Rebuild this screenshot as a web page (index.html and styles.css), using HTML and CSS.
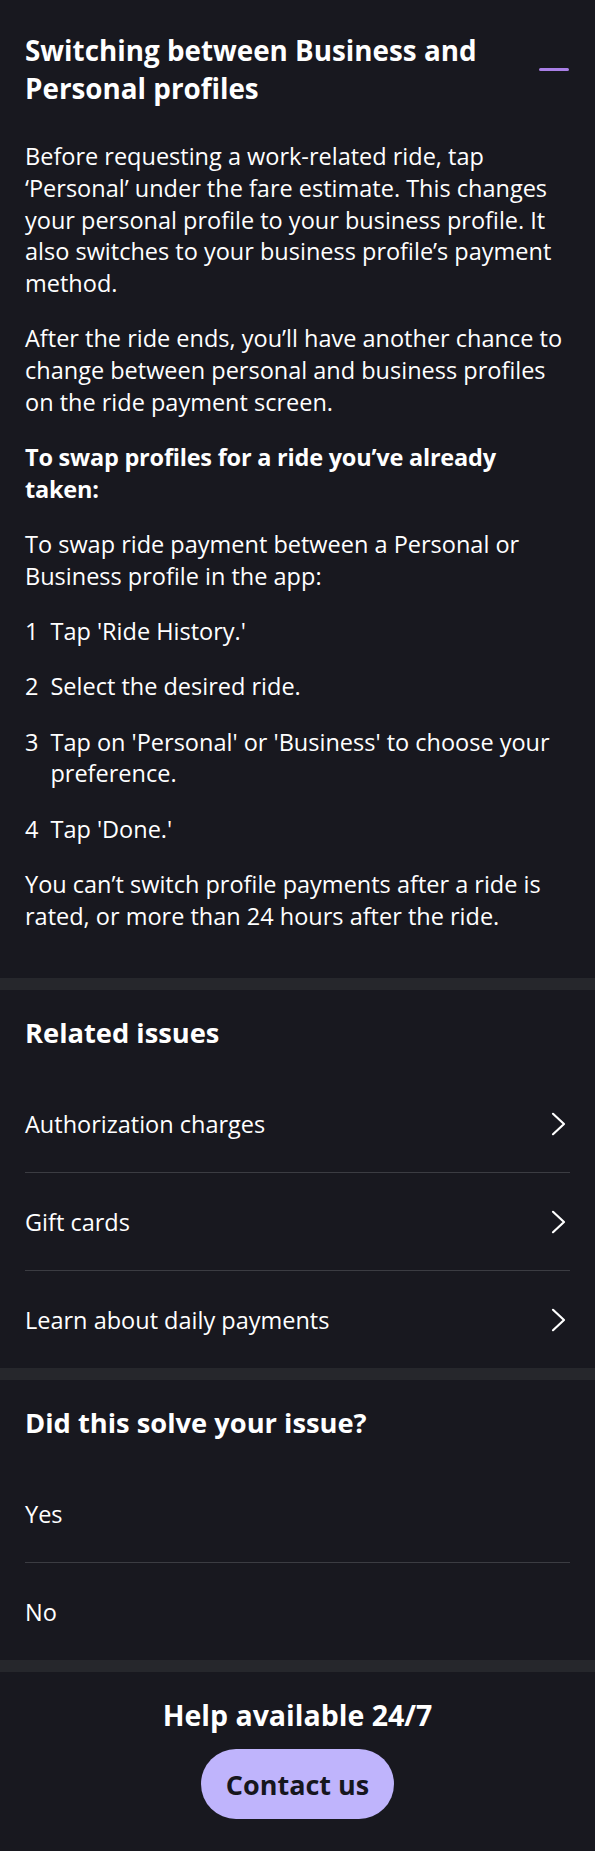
FILE: index.html
```html
<!DOCTYPE html>
<html lang="en">
<head>
<meta charset="utf-8">
<title>Switching between Business and Personal profiles</title>
<link rel="stylesheet" href="styles.css">
</head>
<body>
<main class="page">
  <section class="article">
    <header class="article-head">
      <h1 class="article-title">Switching between Business and Personal profiles</h1>
      <span class="collapse-dash" aria-hidden="true"></span>
    </header>
    <div class="article-body">
      <p>Before requesting a work-related ride, tap ‘Personal’ under the fare estimate. This changes your personal profile to your business profile. It also switches to your business profile’s payment method.</p>
      <p>After the ride ends, you’ll have another chance to change between personal and business profiles on the ride payment screen.</p>
      <p class="strong">To swap profiles for a ride you’ve already taken:</p>
      <p>To swap ride payment between a Personal or Business profile in the app:</p>
      <ol class="steps">
        <li><span class="step-num">1</span><span class="step-text">Tap 'Ride History.'</span></li>
        <li><span class="step-num">2</span><span class="step-text">Select the desired ride.</span></li>
        <li><span class="step-num">3</span><span class="step-text">Tap on 'Personal' or 'Business' to choose your preference.</span></li>
        <li><span class="step-num">4</span><span class="step-text">Tap 'Done.'</span></li>
      </ol>
      <p>You can’t switch profile payments after a ride is rated, or more than 24 hours after the ride.</p>
    </div>
  </section>

  <section class="block">
    <h2 class="block-title">Related issues</h2>
    <ul class="row-list">
      <li><a class="row" href="#">Authorization charges<svg class="chev" viewBox="0 0 24 24" width="24" height="24"><path d="M7 1.8 L18 12 L7 22.2" fill="none" stroke="#fff" stroke-width="2.2" stroke-linecap="round" stroke-linejoin="round"/></svg></a></li>
      <li><a class="row" href="#">Gift cards<svg class="chev" viewBox="0 0 24 24" width="24" height="24"><path d="M7 1.8 L18 12 L7 22.2" fill="none" stroke="#fff" stroke-width="2.2" stroke-linecap="round" stroke-linejoin="round"/></svg></a></li>
      <li><a class="row" href="#">Learn about daily payments<svg class="chev" viewBox="0 0 24 24" width="24" height="24"><path d="M7 1.8 L18 12 L7 22.2" fill="none" stroke="#fff" stroke-width="2.2" stroke-linecap="round" stroke-linejoin="round"/></svg></a></li>
    </ul>
  </section>

  <section class="block">
    <h2 class="block-title">Did this solve your issue?</h2>
    <ul class="row-list">
      <li><a class="row" href="#">Yes</a></li>
      <li><a class="row" href="#">No</a></li>
    </ul>
  </section>

  <section class="help">
    <h2 class="help-title">Help available 24/7</h2>
    <button class="contact-btn" type="button">Contact us</button>
  </section>
</main>
</body>
</html>
```

FILE: styles.css
```css
html, body {
  margin: 0;
  background: #18181f;
  color: #ffffff;
  font-family: "Open Sans", "Noto Sans", sans-serif;
}

.page {
  display: flex;
  flex-direction: column;
}

.article {
  padding: 31px 25px 46px;
}

.article-head {
  display: flex;
  align-items: center;
  justify-content: space-between;
  gap: 24px;
}

.article-title {
  margin: 0;
  font-size: 27.8px;
  line-height: 38px;
  font-weight: 700;
}

.collapse-dash {
  flex: none;
  width: 30px;
  height: 3px;
  margin-right: 1px;
  border-radius: 2px;
  background: #a97fe6;
}

.article-body {
  margin-top: 34px;
  font-size: 23.5px;
  line-height: 31.75px;
}

.article-body p {
  margin: 0 0 23.5px;
}

.article-body > :last-child {
  margin-bottom: 0;
}

.strong {
  font-weight: 700;
  letter-spacing: -0.22px;
}

.steps {
  list-style: none;
  margin: 0 0 23.5px;
  padding: 0;
  display: flex;
  flex-direction: column;
  gap: 23.5px;
}

.steps li {
  display: flex;
  gap: 12px;
}

.step-num {
  flex: none;
}

.block {
  border-top: 12px solid #26272c;
  padding: 24px 25px 0;
}

.block-title {
  margin: 0 0 23px;
  font-size: 27.3px;
  line-height: 38px;
  font-weight: 700;
}

.row-list {
  list-style: none;
  margin: 0;
  padding: 0;
}

.row-list li + li {
  border-top: 1px solid #3b3c42;
}

.row {
  display: flex;
  align-items: center;
  justify-content: space-between;
  height: 97px;
  font-size: 23.5px;
  color: #ffffff;
  text-decoration: none;
}

.chev {
  flex: none;
  display: block;
}

.help {
  border-top: 12px solid #26272c;
  padding: 24px 25px 31px;
  display: flex;
  flex-direction: column;
  align-items: center;
  gap: 15px;
}

.help-title {
  margin: 0;
  font-size: 28.5px;
  line-height: 38px;
  font-weight: 700;
}

.contact-btn {
  height: 70px;
  padding: 0 25px;
  border: 0;
  border-radius: 35px;
  background: #bfb4fc;
  color: #16161d;
  font-family: inherit;
  font-size: 27px;
  font-weight: 700;
}
```
